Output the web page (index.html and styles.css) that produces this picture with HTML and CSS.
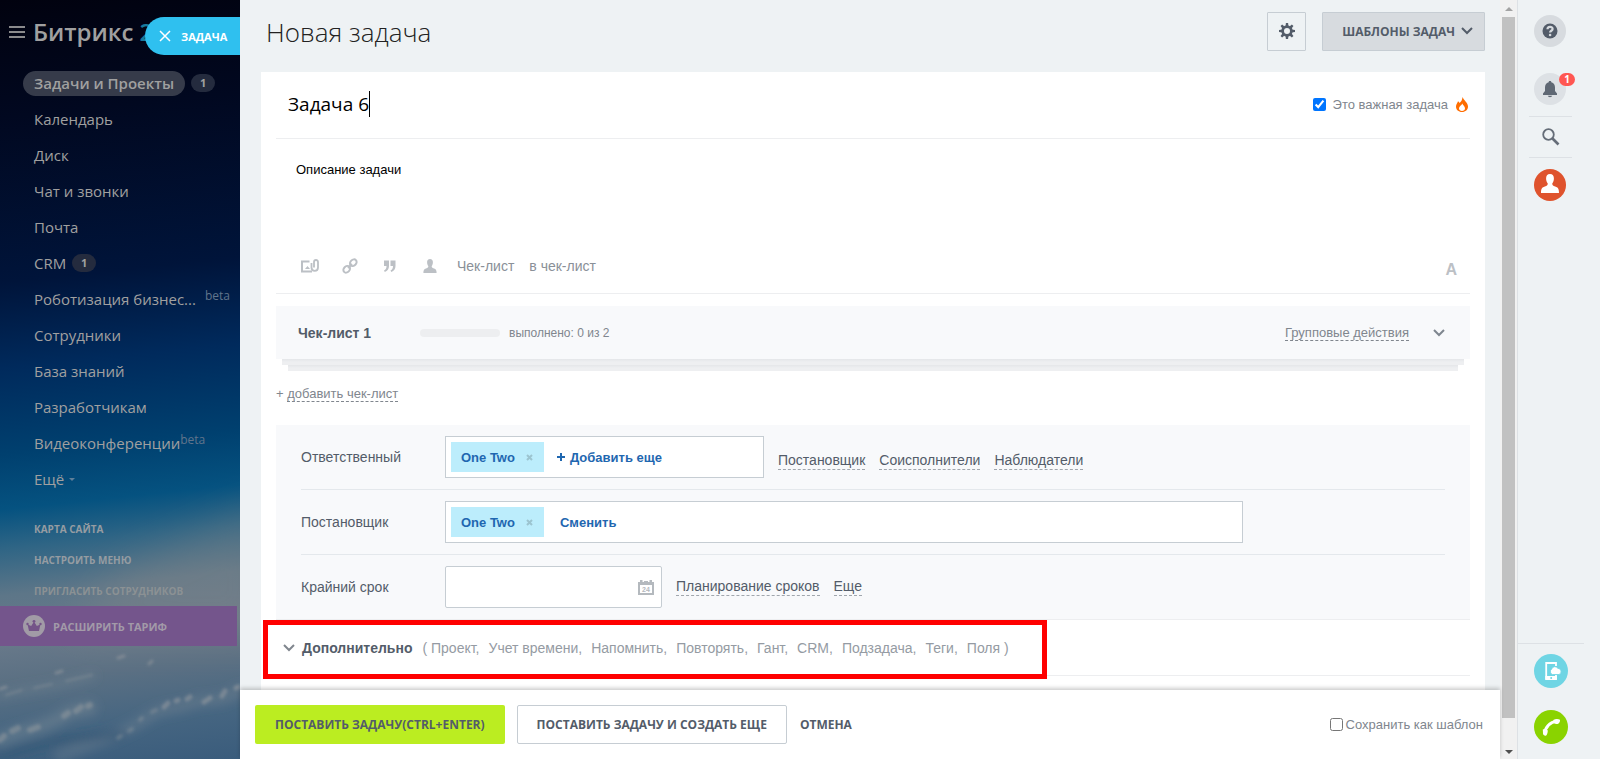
FILE: index.html
```html
<!DOCTYPE html>
<html lang="ru">
<head>
<meta charset="utf-8">
<title>Новая задача</title>
<link rel="stylesheet" href="styles.css">
</head>
<body>
<div class="app">
  <aside class="sidebar">
    <svg class="sky" viewBox="0 0 240 759" preserveAspectRatio="none" aria-hidden="true">
      <defs>
        <filter id="soft" x="-20%" y="-60%" width="140%" height="220%"><feGaussianBlur stdDeviation="1.600"/></filter>
        <filter id="wide" x="-20%" y="-80%" width="140%" height="260%"><feGaussianBlur stdDeviation="5"/></filter>
        <filter id="haze" filterUnits="userSpaceOnUse" x="-100" y="400" width="440" height="460"><feGaussianBlur stdDeviation="20"/></filter>
      </defs>
      <path d="M120 570L270 500V640H60Z" fill="#8f8b88" opacity=".3" filter="url(#haze)"/>
      <g filter="url(#wide)" fill="none" stroke="#7d8b98" stroke-linecap="round">
        <path d="M0 696C25 688 50 690 92 676" stroke-width="9" opacity=".25"/>
        <path d="M0 740C20 730 40 730 60 718S78 712 90 708" stroke-width="14" opacity=".4"/>
        <path d="M60 756C120 734 135 726 150 716S170 712 190 704S215 706 240 690" stroke-width="12" opacity=".3"/>
        <path d="M0 756L60 740L120 734" stroke="#2b4d6f" stroke-width="10" opacity=".4"/>
      </g>
      <g filter="url(#soft)" fill="none" stroke="#a3a4a6" stroke-linecap="round">
        <path d="M6 695L22 690M34 688L52 684M66 681L92 675" stroke-width="2" opacity=".3"/>
        <path d="M0 689L6 687M56 673L62 671M118 658L124 656M149 664L152 661" stroke-width="3" opacity=".45"/>
        <path d="M0 740L4 736M12 731L18 728M30 730L38 727M64 716L68 713M76 711L81 707M88 706L90 705" stroke-width="6" opacity=".4"/>
        <path d="M118 738L121 736M129 731L132 729M140 720L142 718M152 712L156 710" stroke-width="4" opacity=".3"/>
        <path d="M164 707L168 703M176 701L178 700M187 699L190 697M204 702L210 698M222 696L225 691M236 688L238 687" stroke-width="5" opacity=".45"/>
      </g>
    </svg>
    <div class="brand">
      <button class="burger" aria-label="Меню"><i></i><i></i><i></i></button>
      <span class="logo">Битрикс <b>24</b></span>
    </div>
    <button class="slider-tab">
      <svg width="12" height="12" viewBox="0 0 12 12" aria-hidden="true"><path d="M1 1l10 10M11 1L1 11" stroke="#fff" stroke-width="1.5"/></svg>
      ЗАДАЧА
    </button>
    <nav class="menu">
      <div class="item"><a class="current" href="#">Задачи и Проекты</a><span class="count">1</span></div>
      <div class="item"><a href="#">Календарь</a></div>
      <div class="item"><a href="#">Диск</a></div>
      <div class="item"><a href="#">Чат и звонки</a></div>
      <div class="item"><a href="#">Почта</a></div>
      <div class="item"><a href="#">CRM</a><span class="count">1</span></div>
      <div class="item"><a href="#">Роботизация бизнес...</a><span class="beta apart">beta</span></div>
      <div class="item"><a href="#">Сотрудники</a></div>
      <div class="item"><a href="#">База знаний</a></div>
      <div class="item"><a href="#">Разработчикам</a></div>
      <div class="item"><a href="#">Видеоконференции</a><span class="beta">beta</span></div>
      <div class="item"><a href="#">Ещё</a><i class="more"></i></div>
    </nav>
    <nav class="submenu">
      <a href="#">КАРТА САЙТА</a>
      <a href="#">НАСТРОИТЬ МЕНЮ</a>
      <a class="faded" href="#">ПРИГЛАСИТЬ СОТРУДНИКОВ</a>
    </nav>
    <button class="upgrade">
      <svg width="22" height="22" viewBox="0 0 22 22" aria-hidden="true"><circle cx="11" cy="11" r="11" fill="#a19ba6"/><path d="M6 16L4.600 9.500L8.200 11L11 6.500L13.800 11L17.400 9.500L16 16Z" fill="#745488"/><circle cx="4.500" cy="9" r="1.200" fill="#745488"/><circle cx="11" cy="6.300" r="1.400" fill="#745488"/><circle cx="17.500" cy="9" r="1.200" fill="#745488"/></svg>
      РАСШИРИТЬ ТАРИФ
    </button>
  </aside>

  <main class="panel">
    <header class="head">
      <h1>Новая задача</h1>
      <button class="gear" aria-label="Настройки">
        <svg width="16" height="16" viewBox="0 0 16 16" aria-hidden="true"><g fill="#535c69"><path fill-rule="evenodd" d="M8 2.300a5.700 5.700 0 1 0 0 11.400a5.700 5.700 0 0 0 0-11.400zM8 5a3 3 0 1 1 0 6a3 3 0 0 1 0-6z"/><path id="tooth" d="M6.500 3.500L6.900 0H9.100L9.500 3.500Z"/><use href="#tooth" transform="rotate(45 8 8)"/><use href="#tooth" transform="rotate(90 8 8)"/><use href="#tooth" transform="rotate(135 8 8)"/><use href="#tooth" transform="rotate(180 8 8)"/><use href="#tooth" transform="rotate(225 8 8)"/><use href="#tooth" transform="rotate(270 8 8)"/><use href="#tooth" transform="rotate(315 8 8)"/></g></svg>
      </button>
      <button class="templates">ШАБЛОНЫ ЗАДАЧ
        <svg width="12" height="8" viewBox="0 0 12 8" aria-hidden="true"><path d="M1 1l5 5l5-5" fill="none" stroke="#535c69" stroke-width="2"/></svg>
      </button>
    </header>

    <section class="card">
      <div class="title-row">
        <input class="task-title" type="text" value="Задача 6" size="8" aria-label="Название задачи"><i class="caret"></i>
        <label class="important"><input type="checkbox" checked><span>Это важная задача</span></label>
        <svg class="fire" width="12" height="15" viewBox="0 0 12 15" aria-hidden="true"><path fill="#ff6d00" fill-rule="evenodd" d="M6.500 0C7.500 3 11.900 5.500 12 9.500C12 12.700 9.500 15 6 15S0 12.700 0 9.500C0 7 1.500 6 2 4.200C2.800 4.700 3.300 5.200 3.500 6C5.500 4.500 6.300 2.500 6.500 0ZM6.300 6.500C5.800 8.300 3 9.300 3 11.300C3 13 4.300 14 6 14S9 13 9 11.300C9 9.300 6.900 8.300 6.300 6.500Z"/></svg>
      </div>
      <textarea class="description" aria-label="Описание задачи">Описание задачи</textarea>
      <div class="toolbar">
        <button aria-label="Файл"><svg width="18" height="14" viewBox="0 0 18 14" fill="none" stroke="#bcc0c5"><path d="M8.500 2.500H1V12.500H11" stroke-width="2"/><path d="M4 10l2.500-3l2.500 3z" fill="#bcc0c5" stroke="none"/><path d="M10.500 4V8.500C10.500 13 17 13 17 8.500V3C17 .300 13 .300 13 3V8.500" stroke-width="1.800"/></svg></button>
        <button aria-label="Ссылка"><svg width="16" height="16" viewBox="0 0 16 16" fill="none" stroke="#bcc0c5" stroke-width="2"><ellipse cx="11.300" cy="4.700" rx="3.700" ry="2.900" transform="rotate(-45 11.300 4.700)"/><ellipse cx="4.700" cy="11.300" rx="3.700" ry="2.900" transform="rotate(-45 4.700 11.300)"/><path d="M6 10l4-4"/></svg></button>
        <button aria-label="Цитата"><svg width="12" height="12" viewBox="0 0 12 12" fill="#bcc0c5"><path id="quote" d="M0 .500H5V6C5 9 3.500 11 .800 12L0 10.500C1.800 9.500 2.500 8 2.500 6H0Z"/><use href="#quote" x="6.500"/></svg></button>
        <button aria-label="Упомянуть"><svg width="14" height="14" viewBox="0 0 14 14" fill="#bcc0c5"><path d="M7 0C9 0 10 1.300 9.900 3.200C9.900 5 9.300 6.300 8.700 7C8.600 8.500 9.200 8.800 11 9.500C13 10.200 13.600 11 13.600 14H.400C.400 11 1 10.200 3 9.500C4.800 8.800 5.400 8.500 5.300 7C4.700 6.300 4.100 5 4.100 3.200C4 1.300 5 0 7 0Z"/></svg></button>
        <div class="words"><button>Чек-лист</button><button>в чек-лист</button></div>
        <button class="format" aria-label="Форматирование">A</button>
      </div>

      <div class="checklist">
        <h2>Чек-лист 1</h2>
        <span class="bar"></span>
        <span class="done">выполнено: 0 из 2</span>
        <a class="dashed group" href="#">Групповые действия</a>
        <svg width="12" height="8" viewBox="0 0 12 8" aria-hidden="true"><path d="M1 1l5 5l5-5" fill="none" stroke="#7f868f" stroke-width="2"/></svg>
      </div>
      <div class="stack one"></div>
      <div class="stack two"></div>
      <p class="add">+ <a class="dashed" href="#">добавить чек-лист</a></p>

      <div class="fields">
        <div class="field">
          <span class="name">Ответственный</span>
          <div class="box medium"><span class="chip">One Two <button aria-label="Убрать"><svg width="7" height="7" viewBox="0 0 7 7"><path d="M1 1l5 5M6 1L1 6" stroke="#9cc4d0" stroke-width="2"/></svg></button></span><button class="pick"><svg width="8" height="8" viewBox="0 0 8 8" aria-hidden="true"><path d="M4 0v8M0 4h8" stroke="#1f67b0" stroke-width="2"/></svg>Добавить еще</button></div>
          <div class="links low"><a class="dashed" href="#">Постановщик</a><a class="dashed" href="#">Соисполнители</a><a class="dashed" href="#">Наблюдатели</a></div>
        </div>
        <div class="field">
          <span class="name">Постановщик</span>
          <div class="box wide"><span class="chip">One Two <button aria-label="Убрать"><svg width="7" height="7" viewBox="0 0 7 7"><path d="M1 1l5 5M6 1L1 6" stroke="#9cc4d0" stroke-width="2"/></svg></button></span><button class="pick change">Сменить</button></div>
        </div>
        <div class="field">
          <label class="name" for="deadline">Крайний срок</label>
          <div class="box date"><input id="deadline" type="text">
            <svg width="16" height="15" viewBox="0 0 16 15" aria-hidden="true"><path fill="#b4b9be" fill-rule="evenodd" d="M0 2H2V0H4.500V2H6V1H10V2H11.500V0H14V2H16V15H0ZM2 5V13H14V5Z"/><text x="8" y="11.500" text-anchor="middle" class="day">24</text></svg>
          </div>
          <div class="links"><a class="dashed" href="#">Планирование сроков</a><a class="dashed" href="#">Еще</a></div>
        </div>
      </div>

      <div class="extra">
        <svg width="12" height="8" viewBox="0 0 12 8" aria-hidden="true"><path d="M1 1l5 5l5-5" fill="none" stroke="#80868e" stroke-width="2"/></svg>
        <strong>Дополнительно</strong>
        <div class="options"><span>( Проект,</span><span>Учет времени,</span><span>Напомнить,</span><span>Повторять,</span><span>Гант,</span><span>CRM,</span><span>Подзадача,</span><span>Теги,</span><span>Поля )</span></div>
        <div class="marker"></div>
      </div>
    </section>

    <footer class="actions">
      <button class="btn primary">ПОСТАВИТЬ ЗАДАЧУ(CTRL+ENTER)</button>
      <button class="btn outline">ПОСТАВИТЬ ЗАДАЧУ И СОЗДАТЬ ЕЩЕ</button>
      <button class="btn plain">ОТМЕНА</button>
      <label class="save"><input type="checkbox"><span>Сохранить как шаблон</span></label>
    </footer>
  </main>

  <div class="scroll" aria-hidden="true">
    <i class="up"></i><i class="thumb"></i><i class="down"></i>
  </div>

  <aside class="rail">
    <button class="round help" aria-label="Помощь"><svg width="32" height="32" viewBox="0 0 32 32"><circle cx="16" cy="16" r="16" fill="#d7dbdf"/><circle cx="16" cy="16" r="7.500" fill="#535c69"/><path d="M13.500 14.300C13.500 11.100 18.600 11.100 18.600 14C18.600 15.800 16.100 15.700 16.100 17.500" fill="none" stroke="#d7dbdf" stroke-width="2.200"/><circle cx="16.100" cy="20" r="1.300" fill="#d7dbdf"/></svg></button>
    <button class="round bell" aria-label="Уведомления"><svg width="32" height="32" viewBox="0 0 32 32"><circle cx="16" cy="16" r="16" fill="#dde1e5"/><path d="M16 8C17 8 17.300 8.600 17.300 9.200C20 9.800 21 12 21 14.500V18L23 20.500V22H9V20.500L11 18V14.500C11 12 12 9.800 14.700 9.200C14.700 8.600 15 8 16 8ZM13.800 22.700H18.200C18 24.600 14 24.600 13.800 22.700Z" fill="#5f6874"/></svg><span class="alert">1</span></button>
    <button class="find" aria-label="Поиск"><svg width="18" height="18" viewBox="0 0 18 18" fill="none" stroke="#656d78"><circle cx="6.500" cy="6.500" r="5.300" stroke-width="1.800"/><path d="M10.500 10.500L16.500 16.500" stroke-width="2.600"/></svg></button>
    <button class="round user" aria-label="Профиль"><svg width="32" height="32" viewBox="0 0 32 32"><circle cx="16" cy="16" r="16" fill="#df532d"/><path d="M16 5C18.700 5 20 6.800 19.900 9.500C19.900 11.800 19.200 13.300 18.300 14.200C18.200 16.200 18.800 16.600 21.200 17.500C24 18.500 25 19.500 25 24H7C7 19.500 8 18.500 10.800 17.500C13.200 16.600 13.800 16.200 13.700 14.200C12.800 13.300 12.100 11.800 12.100 9.500C12 6.800 13.300 5 16 5Z" fill="#fff"/></svg></button>
    <div class="dock">
      <button class="round" aria-label="Приложение"><svg width="34" height="34" viewBox="0 0 34 34"><circle cx="17" cy="17" r="17" fill="#6fd5e4"/><path d="M22 12V9H12.200V24.500H22V21" fill="none" stroke="#fff" stroke-width="1.800"/><path d="M11.300 22H22.900V26H11.300Z" fill="#fff"/><circle cx="17.200" cy="24" r="1" fill="#6fd5e4"/><path d="M18.500 20.500A3 3 0 0 1 17.600 15.200A3.400 3.400 0 0 1 23.800 14.300A3.200 3.200 0 0 1 25 20.500Z" fill="#fff" stroke="#6fd5e4" stroke-width=".800"/></svg></button>
      <button class="round" aria-label="Звонок"><svg width="34" height="34" viewBox="0 0 34 34"><circle cx="17" cy="17" r="17" fill="#8ad300"/><path d="M10.700 24C11 18 15 12.300 23.500 11" fill="none" stroke="#fff" stroke-width="3.200"/><path d="M8.800 19.500C10 18.600 12.300 18.900 13.700 20.200C14 22 13.200 24.500 12 25.700C10.300 26 9.200 25 9 23.500ZM19.300 9.900C21.500 8.500 24.500 8.600 26 9.800C26.200 11.500 25.500 13 24.200 13.800C22.500 14.300 20.500 13.800 19.700 12.500Z" fill="#fff"/></svg></button>
    </div>
  </aside>
</div>
</body>
</html>
```

FILE: styles.css
```css
* { box-sizing: border-box; }
body {
  margin: 0;
  background: #eef2f4;
  font-family: "Liberation Sans", Arial, sans-serif;
  font-size: 13px;
  color: #535c69;
}
button { padding: 0; border: 0; background: none; font: inherit; color: inherit; cursor: pointer; }
a { color: inherit; text-decoration: none; }
svg { display: block; flex: none; }
h1, h2, p { margin: 0; }
.app { display: flex; height: 100vh; overflow: hidden; }

/* Sidebar */
.sidebar {
  position: relative;
  flex: none;
  width: 240px;
  overflow: hidden;
  font-family: "Open Sans", sans-serif;
  color: #a0a0a0;
  background: linear-gradient(174deg, #01020f 0%, #010820 15%, #00143a 36%, #002a5c 47%, #00406f 58%, #055280 65%, #2f6585 70%, #5d7688 76%, #68798a 82%, #5b7083 87%, #456581 94%, #3a5c7c 100%);
}
.sky { position: absolute; inset: 0; width: 100%; height: 100%; }
.brand { position: relative; display: flex; align-items: center; gap: 8px; height: 64px; padding-left: 9px; }
.burger { display: grid; gap: 3px; width: 16px; }
.burger i { height: 2px; background: #8a8a8c; }
.logo { font-size: 24px; font-weight: 600; line-height: 32px; white-space: nowrap; }
.logo b { font-weight: 600; color: #187a9c; }
.slider-tab {
  position: absolute;
  top: 17px;
  right: 0;
  display: flex;
  align-items: center;
  gap: 10px;
  width: 95px;
  height: 38px;
  padding-left: 14px;
  border-radius: 19px 0 0 19px;
  background: #2fc0ef;
  color: #fff;
  font-size: 11px;
  font-weight: 700;
}
.menu { position: relative; padding: 1px 0 0 34px; }
.item { display: flex; align-items: center; height: 36px; font-size: 15px; white-space: nowrap; }
.current { margin-left: -11px; padding: 0 11px; border-radius: 13px; background: #363b4a; font-weight: 600; line-height: 25px; }
.count { margin-left: 6px; width: 24px; border-radius: 9px; background: #242b3e; font-size: 11px; font-weight: 700; line-height: 18px; text-align: center; }
.beta { align-self: flex-start; font-size: 12px; line-height: 30px; color: #60758c; }
.apart { margin-left: 9px; }
.more { margin-left: 5px; border: 3px solid transparent; border-top-color: #60809a; border-bottom: 0; }
.submenu { position: relative; display: flex; flex-direction: column; padding: 17px 0 0 34px; margin-bottom: -1px; font-size: 10px; font-weight: 700; line-height: 31px; color: #959ca2; }
.faded { color: #8b9194; }
.upgrade {
  position: relative;
  display: flex;
  align-items: center;
  gap: 8px;
  width: 237px;
  height: 40px;
  padding-left: 23px;
  background: #74558c;
  color: #a29aa8;
  font-size: 11px;
  font-weight: 700;
}

/* Task panel */
.panel { flex: 1; min-width: 0; display: flex; flex-direction: column; }
.head { flex: none; display: flex; align-items: center; height: 72px; padding: 0 15px 10px 26px; font-family: "Open Sans", sans-serif; }
h1 { flex: 1; padding-top: 2px; font-size: 26px; font-weight: 300; line-height: 36px; color: #222; }
.gear { display: grid; place-items: center; width: 39px; height: 39px; margin-right: 16px; border: 1px solid #c6cdd3; border-radius: 1px; }
.templates { display: flex; align-items: center; gap: 6px; height: 39px; padding: 0 11px 0 19px; border: 1px solid #c6cdd3; border-radius: 1px; background: #d7dbdf; font-size: 12px; font-weight: 700; }
.card { flex: 1; min-height: 0; overflow: hidden; margin: 0 15px 0 21px; padding: 0 15px; background: #fff; }
.title-row { display: flex; align-items: center; height: 67px; padding: 0 2px 2px 12px; border-bottom: 1px solid #edeef0; }
.task-title { field-sizing: content; padding: 0; border: 0; outline: 0; font-family: "Open Sans", sans-serif; font-size: 19px; color: #000; }
.caret { width: 1px; height: 26px; background: #000; }
.important { display: flex; align-items: center; gap: 7px; margin-left: auto; color: #80868e; }
.important input, .save input { width: 13px; height: 13px; margin: 0; }
.fire { margin-left: 8px; }
.description { display: block; width: 100%; height: 100px; padding: 23px 20px 0; border: 0; outline: 0; resize: none; font: 13px/16px "Liberation Sans", Arial, sans-serif; color: #000; }
.toolbar { display: flex; align-items: center; gap: 22px; height: 55px; padding: 0 13px 0 25px; border-bottom: 1px solid #edeef0; font-size: 14px; color: #8a9098; }
.toolbar > button { display: grid; place-items: center; width: 18px; }
.words { display: flex; gap: 15px; margin-left: -4px; }
.toolbar > .format { width: auto; margin: 8px 0 0 auto; font-size: 16px; font-weight: 700; color: #bcc0c5; }
.checklist { display: flex; align-items: center; height: 53px; margin-top: 12px; padding: 0 25px 0 22px; background: #f8f9fb; }
h2 { width: 122px; font-size: 14px; line-height: 20px; color: #535c69; }
.bar { width: 80px; height: 8px; margin-right: 9px; border-radius: 4px; background: #edeef0; }
.done { font-size: 12px; color: #80868e; }
.dashed { border-bottom: 1px dashed; }
.group { margin: 0 24px 0 auto; color: #80868e; }
.stack { height: 6px; background: linear-gradient(#e4e6e9, #eeeff1 50%); }
.one { margin: 0 6px; }
.two { margin: 0 12px; }
.add { padding: 15px 0 0; line-height: 16px; color: #80868e; }
.fields { margin-top: 23px; padding: 0 25px; border-bottom: 1px solid #edeef0; background: #f8f9fb; }
.field { display: flex; align-items: center; height: 65px; border-bottom: 1px solid #e4e8ec; font-size: 14px; }
.field:last-child { height: 64px; border-bottom: 0; }
.name { width: 144px; }
.box { display: flex; align-items: center; height: 42px; padding: 0 5px; border: 1px solid #c6cdd3; background: #fff; }
.medium { width: 319px; }
.wide { width: 798px; }
.date { width: 217px; padding-right: 7px; border-radius: 2px; }
.date input { flex: 1; min-width: 0; height: 38px; border: 0; outline: 0; font-size: 14px; }
.day { font: 700 7px "Liberation Sans", Arial, sans-serif; fill: #b4b9be; }
.chip, .pick { display: flex; align-items: center; font-size: 13px; font-weight: 700; color: #1f67b0; }
.chip { gap: 11px; height: 30px; padding: 0 11px 0 10px; background: #bcedfc; }
.pick { gap: 5px; margin-left: 13px; }
.change { margin-left: 16px; }
.links { display: flex; gap: 14px; margin-left: 14px; }
.links a { line-height: 17px; border-color: #a0a6ad; }
.low { padding-top: 7px; }
.extra { position: relative; display: flex; align-items: center; height: 56px; padding-left: 7px; border-bottom: 1px solid #edeef0; font-size: 14px; }
.extra strong { margin: 0 10px 0 7px; }
.options { display: flex; gap: 9px; color: #959ba3; }
.marker { position: absolute; left: -13px; top: 0; width: 784px; height: 59px; border: 5px solid #f00; }
.actions { position: relative; flex: none; display: flex; align-items: center; height: 69px; padding: 0 17px 0 15px; background: #fff; box-shadow: 0 -2px 4px rgba(0, 0, 0, .2); }
.btn { height: 39px; border-radius: 2px; padding: 0 20px; font-family: "Open Sans", sans-serif; font-size: 12px; font-weight: 700; white-space: nowrap; }
.primary { background: #bbed21; }
.outline { margin-left: 12px; padding: 0 19px; border: 1px solid #c6cdd3; }
.plain { padding: 0 13px; }
.save { display: flex; align-items: center; gap: 3px; margin-left: auto; color: #80868e; }

/* Scrollbar */
.scroll { flex: none; display: flex; flex-direction: column; align-items: center; width: 17px; padding: 7px 0 5px; background: #f1f1f1; }
.up { border: 4px solid transparent; border-top: 0; border-bottom-color: #a3a3a3; }
.thumb { flex: 1; width: 13px; margin: 6px 0 32px; background: #c1c1c1; }
.down { border: 4px solid transparent; border-bottom: 0; border-top-color: #505050; }

/* Right rail */
.rail { flex: none; display: flex; flex-direction: column; align-items: flex-start; width: 83px; padding: 15px 0; border-left: 1px solid #dde1e5; }
.round { display: block; margin-left: 16px; }
.bell { position: relative; margin-top: 26px; }
.alert { position: absolute; left: 25px; top: 0; width: 16px; border-radius: 7px; background: #ff5752; color: #fff; font: 700 10px/13px "Open Sans", sans-serif; text-align: center; }
.find { display: grid; place-items: center; width: 43px; height: 42px; margin: 11px 0 11px 11px; border: solid #dde1e5; border-width: 1px 0; }
.dock { display: flex; flex-direction: column; gap: 22px; width: 66px; margin-top: auto; padding-top: 10px; border-top: 1px solid #dde1e5; }
.dock .round { margin-left: 16px; }
```
